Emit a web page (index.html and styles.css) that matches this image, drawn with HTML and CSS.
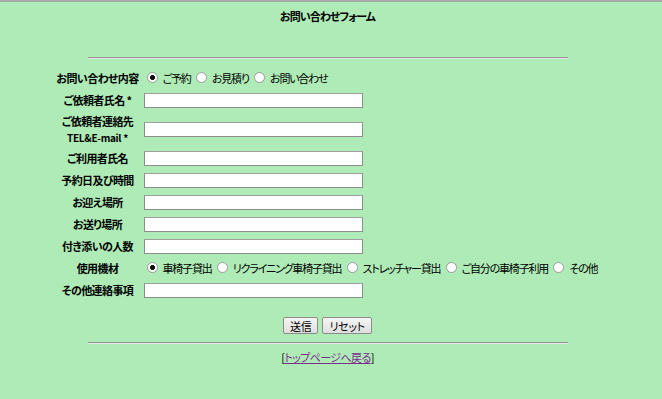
FILE: index.html
```html
<!DOCTYPE html>
<html lang="ja">
<head>
  <meta charset="UTF-8" />
  <title>お問い合わせフォーム</title>
  <link rel="stylesheet" href="styles.css">
</head>
<body>
  <div class="page">
    <h1 class="title">お問い合わせフォーム</h1>
    <hr class="rule">

    <form class="contact">
      <table class="form-table">
        <tr>
          <th>お問い合わせ内容</th>
          <td class="choices">
            <label><input type="radio" name="kind" checked>ご予約</label>
            <label><input type="radio" name="kind">お見積り</label>
            <label><input type="radio" name="kind">お問い合わせ</label>
          </td>
        </tr>
        <tr>
          <th>ご依頼者氏名 *</th>
          <td><input type="text" class="field"></td>
        </tr>
        <tr class="tall">
          <th>ご依頼者連絡先<br><span class="small">TEL&amp;E-mail *</span></th>
          <td><input type="text" class="field"></td>
        </tr>
        <tr>
          <th>ご利用者氏名</th>
          <td><input type="text" class="field"></td>
        </tr>
        <tr>
          <th>予約日及び時間</th>
          <td><input type="text" class="field"></td>
        </tr>
        <tr>
          <th>お迎え場所</th>
          <td><input type="text" class="field"></td>
        </tr>
        <tr>
          <th>お送り場所</th>
          <td><input type="text" class="field"></td>
        </tr>
        <tr>
          <th>付き添いの人数</th>
          <td><input type="text" class="field"></td>
        </tr>
        <tr>
          <th>使用機材</th>
          <td class="choices">
            <label><input type="radio" name="gear" checked>車椅子貸出</label>
            <label><input type="radio" name="gear">リクライニング車椅子貸出</label>
            <label><input type="radio" name="gear">ストレッチャー貸出</label>
            <label><input type="radio" name="gear">ご自分の車椅子利用</label>
            <label><input type="radio" name="gear">その他</label>
          </td>
        </tr>
        <tr>
          <th>その他連絡事項</th>
          <td><input type="text" class="field"></td>
        </tr>
      </table>

      <div class="buttons">
        <button type="submit" class="btn">送信</button>
        <button type="reset" class="btn">リセット</button>
      </div>
    </form>

    <hr class="rule">
    <p class="back">[<a href="#">トップページへ戻る</a>]</p>
  </div>
</body>
</html>
```

FILE: styles.css
```css
* {
  box-sizing: border-box;
}

html, body {
  height: 100%;
}

body {
  margin: 0;
  background: #afebb6;
  border-top: 2px solid #a8aaa8;
  font-family: "Noto Sans CJK JP", "DejaVu Sans", sans-serif;
  font-size: 11px;
  font-feature-settings: "palt";
  letter-spacing: -0.6px;
  color: #000;
}

.page {
  width: 655px;
}

.title {
  margin: 7px 0 0;
  font-size: 11px;
  line-height: 14px;
  font-weight: bold;
  letter-spacing: -0.9px;
  text-align: center;
}

.rule {
  width: 480px;
  margin: 34px auto 0;
  border: none;
  border-top: 1px solid #949494;
  border-bottom: 1px solid #e6e6e6;
  height: 0;
}

.form-table {
  width: 548px;
  margin: 8px auto 0;
  border-collapse: collapse;
  table-layout: fixed;
}

.form-table th {
  width: 88px;
  height: 22px;
  padding: 0;
  font-weight: bold;
  text-align: center;
  white-space: nowrap;
  line-height: 16px;
}

.form-table .tall th {
  height: 36px;
}

.small {
  font-size: 10px;
  letter-spacing: -0.3px;
}

.form-table td {
  padding: 0 0 0 2px;
  white-space: nowrap;
}

.field {
  display: block;
  width: 219px;
  height: 15px;
  margin: 0;
  border: 1px solid #8d8d8d;
  border-top-color: #a0a0a0;
  background: #fff;
  font: inherit;
}

.choices {
  letter-spacing: -1.2px;
}

.choices label {
  display: inline-flex;
  align-items: center;
  margin-right: 1px;
}

.choices input {
  appearance: none;
  flex: none;
  width: 11px;
  height: 11px;
  margin: 0 5px 0 3px;
  border: 1px solid #9a9a9a;
  border-radius: 50%;
  background: #fff;
}

.choices input:checked {
  background: radial-gradient(circle, #111 0 2.2px, #fff 2.8px);
}

.buttons {
  margin-top: 16px;
  text-align: center;
  font-size: 0;
}

.btn {
  height: 17px;
  margin: 0 2px;
  padding: 0 6px;
  border: 1px solid #8c8c8c;
  border-radius: 2px;
  background: linear-gradient(#f6f6f6, #dedede);
  font-family: inherit;
  font-size: 11px;
  font-feature-settings: "palt";
  letter-spacing: -0.3px;
  line-height: 14px;
  color: #000;
}

.contact + .rule {
  margin-top: 8px;
}

.back {
  margin: 5px 0 0;
  text-align: center;
  line-height: 16px;
}

.back a {
  color: #7b2c8c;
}
```
